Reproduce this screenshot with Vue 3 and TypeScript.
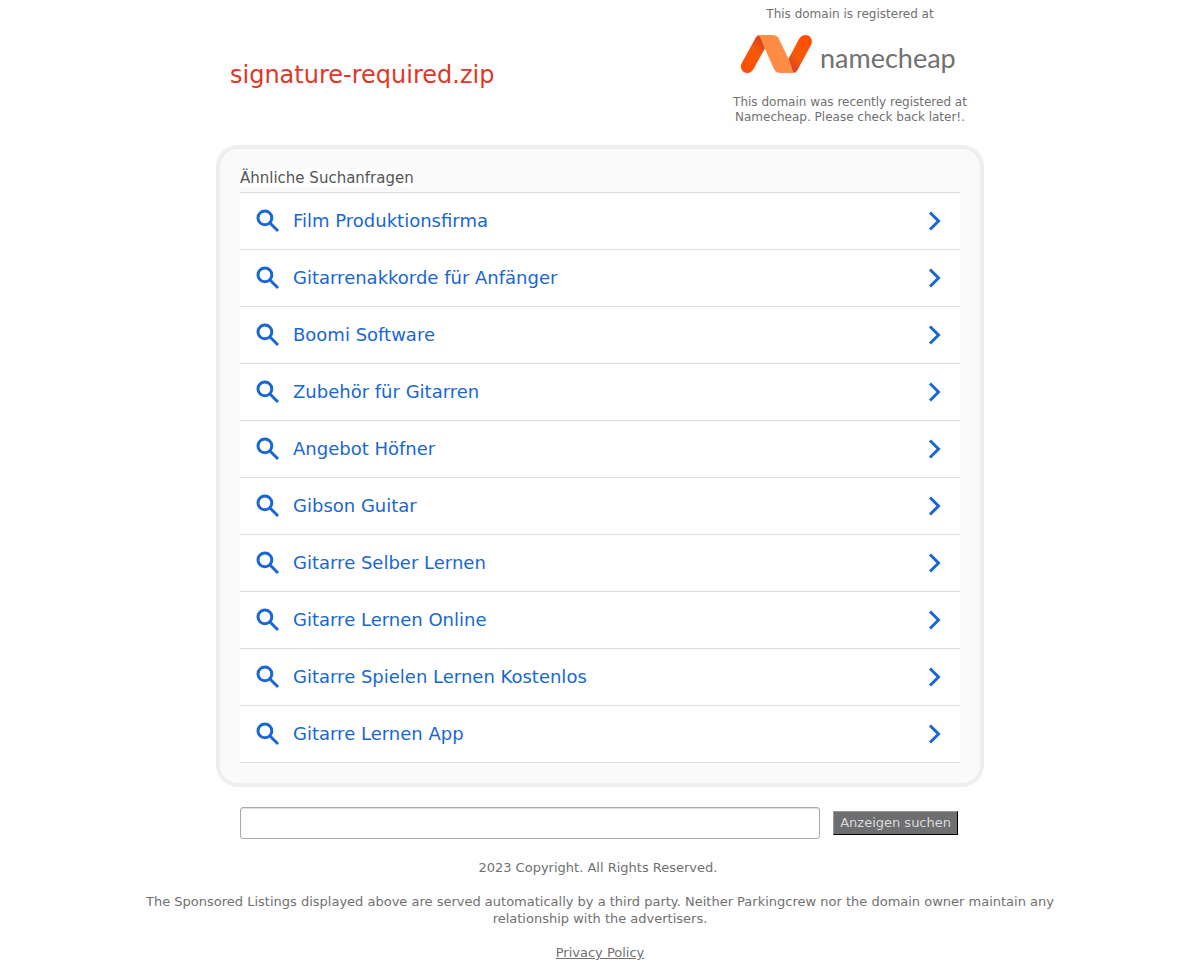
<script setup lang="ts">
import { ref } from 'vue'

const domain = 'signature-required.zip'
const query = ref('')
const searches: string[] = [
  'Film Produktionsfirma',
  'Gitarrenakkorde für Anfänger',
  'Boomi Software',
  'Zubehör für Gitarren',
  'Angebot Höfner',
  'Gibson Guitar',
  'Gitarre Selber Lernen',
  'Gitarre Lernen Online',
  'Gitarre Spielen Lernen Kostenlos',
  'Gitarre Lernen App',
]
</script>

<template>
  <div class="page">
    <header class="header">
      <h1 class="domain">{{ domain }}</h1>
      <div class="registrar">
        <p>This domain is registered at</p>
        <a class="logo" href="#" aria-label="namecheap">
          <svg class="mark" viewBox="0 0 71 38" aria-hidden="true">
            <defs>
              <linearGradient id="left-bar" x1="0.85" y1="0" x2="0.2" y2="1">
                <stop offset="0" stop-color="#d1382f" />
                <stop offset="0.4" stop-color="#f45a09" />
                <stop offset="0.85" stop-color="#ff5000" />
              </linearGradient>
              <linearGradient id="right-bar" x1="0.15" y1="1" x2="0.8" y2="0">
                <stop offset="0" stop-color="#d1382f" />
                <stop offset="0.4" stop-color="#f45a09" />
                <stop offset="0.85" stop-color="#ff5000" />
              </linearGradient>
            </defs>
            <path fill="url(#left-bar)" d="M19 0C17 0 15.500 1 14.500 3L.8 28C-1.800 33 1.500 38 6.500 38C9 38 11 36.500 12.500 34L25 11.500Z" />
            <path fill="url(#right-bar)" d="M52 38C54 38 55.500 37 56.500 35L70 10C72.500 5 69.500 0 64.500 0C62 0 59.500 1.500 58 4L46 26.500Z" />
            <path fill="#ff8c44" d="M18.500 0H31C34.500 0 36.500 1 38 4L48 25C51 31 51 37 54 37.500Q53 38 52 38H40C36.500 38 34.500 37 33 34L24 14C21 8 20 1 16.500 .5Q17.500 0 18.500 0Z" />
          </svg>
          <span class="wordmark">namecheap</span>
        </a>
        <p>This domain was recently registered at Namecheap. Please check back later!.</p>
      </div>
    </header>

    <main>
      <section class="panel">
        <h2 class="heading"><span>Ähnliche Suchanfragen</span></h2>
        <ul class="list">
          <li v-for="item in searches" :key="item">
            <a class="row" href="#">
              <svg class="lens" viewBox="0 0 24 24" aria-hidden="true">
                <circle cx="8.900" cy="8.900" r="6.900" />
                <path d="M14 14L22 22" />
              </svg>
              <span class="label">{{ item }}</span>
              <svg class="chevron" viewBox="0 0 14 20" aria-hidden="true">
                <path d="M2 1.500L10.500 10L2 18.500" />
              </svg>
            </a>
          </li>
        </ul>
      </section>

      <form class="search" @submit.prevent>
        <input v-model="query" class="box" type="text" aria-label="Anzeigen suchen" />
        <button class="submit" type="submit">Anzeigen suchen</button>
      </form>
    </main>

    <footer class="footer">
      <p>2023 Copyright. All Rights Reserved.&nbsp;</p>
      <p>The Sponsored Listings displayed above are served automatically by a third party. Neither Parkingcrew nor the domain owner maintain any relationship with the advertisers.</p>
      <p><a href="#">Privacy Policy</a></p>
    </footer>
  </div>
</template>

<style>
body {
  margin: 0;
  background: #fefefe;
}
</style>

<style scoped>
.page {
  font-family: "DejaVu Sans", sans-serif;
  color: #717171;
  font-size: 13px;
  line-height: 17px;
}
p, h1, h2, ul {
  margin: 0;
  padding: 0;
  font-weight: 400;
}
.header {
  display: flex;
  justify-content: space-between;
  align-items: flex-start;
  box-sizing: border-box;
  max-width: 740px;
  margin: 0 auto;
  padding-top: 7px;
}
.domain {
  margin-top: 54px;
  color: #df3826;
  font-size: 24px;
  line-height: 28px;
}
.registrar {
  width: 240px;
  font-size: 12px;
  line-height: 15px;
  text-align: center;
}
.logo {
  display: flex;
  gap: 8px;
  height: 60px;
  margin: 6px 0 7px;
  padding-left: 11px;
  box-sizing: border-box;
  color: #717171;
  text-decoration: none;
}
.mark {
  flex: none;
  width: 71px;
  height: 38px;
  margin-top: 7px;
}
.wordmark {
  margin-top: 13px;
  font-family: Lato, sans-serif;
  font-size: 27px;
  line-height: 34px;
}
.panel {
  box-sizing: border-box;
  max-width: 768px;
  margin: 20px auto 0;
  padding: 20px;
  border: 4px solid #eee;
  border-radius: 22px;
  background: #fafafa;
}
.heading {
  margin-bottom: 5px;
  color: #555;
  font-size: 15px;
  line-height: 18px;
}
.heading span {
  background: #fff;
}
.list {
  list-style: none;
  border-top: 1px solid #dadce0;
  background: #fff;
}
.row {
  display: flex;
  align-items: center;
  height: 56px;
  padding: 0 18px 0 16px;
  border-bottom: 1px solid #dadce0;
  color: #1967d2;
  font-size: 18px;
  line-height: 24px;
  text-decoration: none;
}
.label {
  flex: 1;
}
.lens, .chevron {
  flex: none;
  fill: none;
  stroke: #1967d2;
  stroke-width: 3;
}
.lens {
  width: 24px;
  height: 24px;
  margin-right: 13px;
}
.chevron {
  width: 14px;
  height: 20px;
}
.search {
  display: flex;
  align-items: center;
  gap: 13px;
  box-sizing: border-box;
  max-width: 720px;
  margin: 20px auto 0;
  padding-right: 2px;
}
.box {
  flex: 1;
  min-width: 0;
  height: 32px;
  box-sizing: border-box;
  padding: 4px 8px;
  border: 1px solid #aaa;
  border-radius: 3px;
  background: #fff;
  box-shadow: inset 0 1px 1px #ddd;
  font: inherit;
}
.submit {
  height: 24px;
  padding: 0 6px 2px;
  border: 1px solid;
  border-color: #999 #000 #000 #999;
  border-radius: 0;
  background: #6d6e70;
  color: #dadada;
  font: inherit;
}
.footer {
  display: grid;
  gap: 17px;
  max-width: 960px;
  margin: 20px auto 0;
  padding-bottom: 12px;
  text-align: center;
}
.footer a {
  color: inherit;
}
</style>
